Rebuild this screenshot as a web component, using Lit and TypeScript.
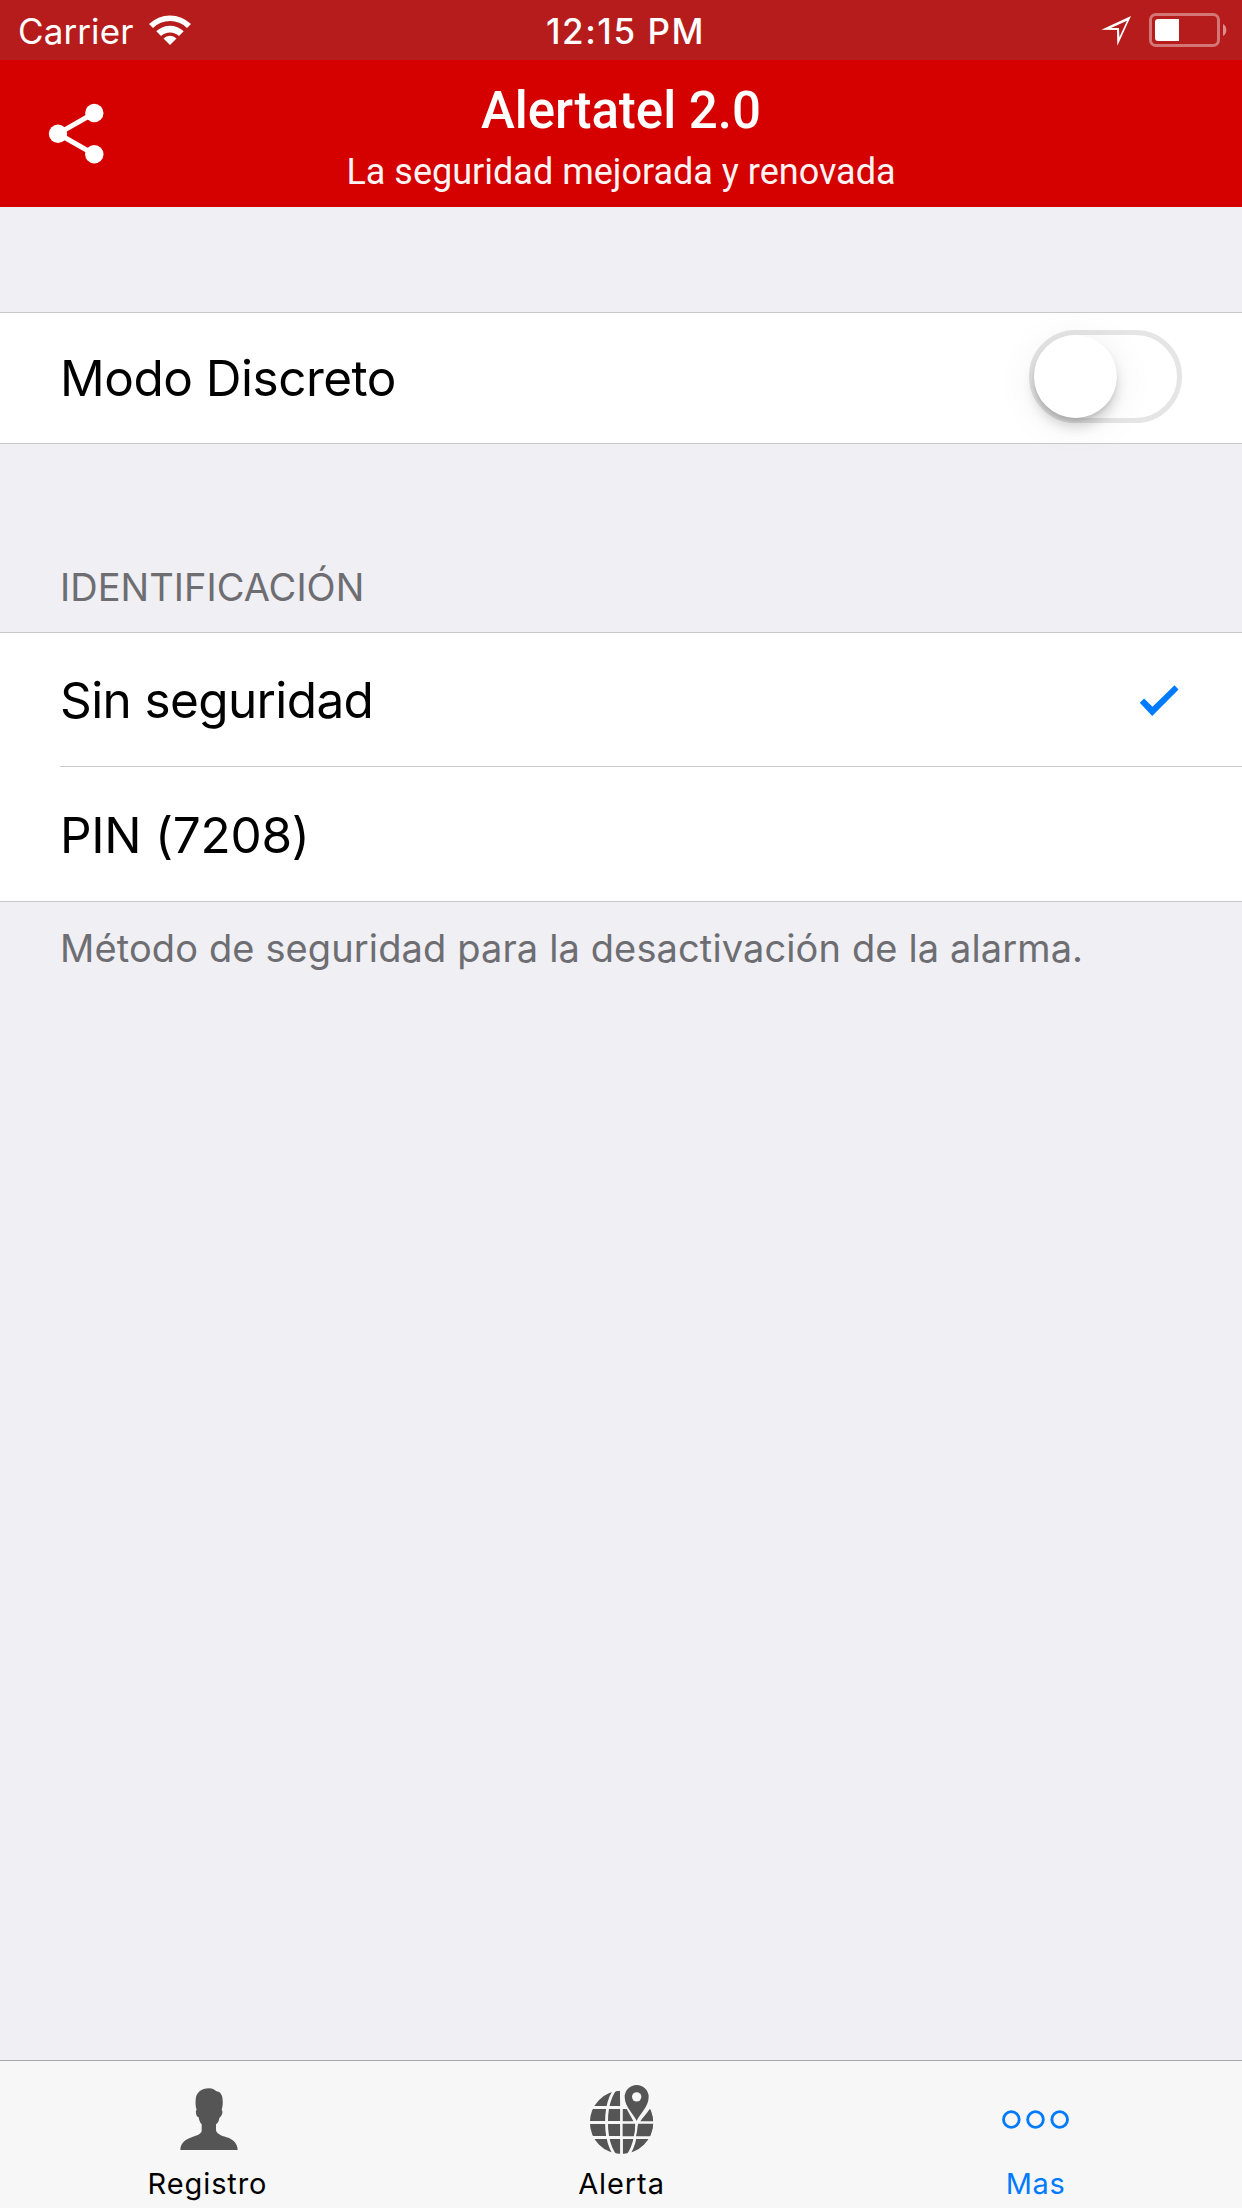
import { LitElement, html, css, svg } from "lit";
import { customElement, property, state } from "lit/decorators.js";

const checkIcon = html`<svg width="40" height="32" viewBox="0 0 40 32" fill="#007aff">
  <path d="M0.8 17.8 5.1 13.5 13.5 21.8 35.5 0.3 39.5 4.6 13.2 30.9Z" />
</svg>`;

const personIcon = svg`<svg width="62" height="63" viewBox="228 143 186 189" fill="#555">
  <path d="M241 329C241 310 255 298 275 291C292 285 304 280 305 272V252C299 246 297 238 296 231C291 229 288 224 288 217C287 213 288 210 290 209C287 200 286 190 287 178C288 157 304 144 327 144C338 144 345 149 349 153C361 154 368 164 368 180C369 192 367 202 365 209C368 211 368 216 366 222C364 228 361 231 358 233C357 241 354 248 348 252V270C350 280 362 286 380 291C400 297 413 311 413 329Z"/>
</svg>`;

const globeIcon = svg`<svg width="65" height="71" viewBox="177 132 195 213">
  <circle cx="274.5" cy="247" r="95" fill="#555"/>
  <g fill="none" stroke="#f7f7f7" stroke-width="8.5">
    <path d="M274.5 145V350M175 202.5H374M175 247.5H374M175 292.5H374"/>
    <ellipse cx="274.5" cy="247" rx="45" ry="108"/>
  </g>
  <path d="M320 262C312 240 270 208 270 171V140H374V171C374 190 366 200 362 207Z" fill="#f7f7f7"/>
  <path d="M278.500 207H290C296 218 303 229 310 243.500H278.500Z" fill="#555"/>
  <path d="M359 207C364 216 368 229 369.500 243.500H331C340 231 352 219 359 207Z" fill="#555"/>
  <path d="M278 251.500H315.500C315.500 266 313 278 311 288.500H278Z" fill="#555"/>
  <path d="M324 251.500H369.500C369 265 365 278 360 288.500H318C321 276 323.500 264 324 251.500Z" fill="#555"/>
  <path d="M320 243C314 225 284 202 284 171A36 36 0 0 1 356 171C356 202 326 225 320 243Z" fill="#555"/>
  <circle cx="320" cy="170.500" r="14" fill="#f7f7f7"/>
</svg>`;

const moreIcon = svg`<svg width="69" height="21" viewBox="123 207 207 63" fill="none" stroke="#007aff" stroke-width="8.5">
  <circle cx="154" cy="238.500" r="23.500"/>
  <circle cx="226.500" cy="238.500" r="23.500"/>
  <circle cx="299" cy="238.500" r="23.500"/>
</svg>`;

@customElement("status-bar")
export class StatusBar extends LitElement {
  static styles = css`
    :host {
      display: grid;
      grid-template-columns: 1fr auto 1fr;
      height: 60px;
      background: #b71c1c;
      color: #fff;
      font: 400 35px/60px Inter, "Liberation Sans", sans-serif;
    }
    .left, .right { display: flex; }
    .left { padding-left: 18px; }
    .right { justify-content: flex-end; padding-right: 14px; }
    .carrier { padding-top: 1px; letter-spacing: 0.1px; }
    .time { padding: 1px 0 0 9px; font-weight: 550; letter-spacing: 1.55px; }
    .wifi { margin: 14px 0 0 15px; }
    .arrow { margin: 15px 16px 0 0; }
    .battery { margin-top: 12px; }
  `;
  render() {
    return html`
      <div class="left">
        <span class="carrier">Carrier</span>
        <svg class="wifi" width="44" height="32" viewBox="149 14 44 32" fill="#fff">
          <path d="M150 24A30 30 0 0 1 192 24L188 28A24.300 24.300 0 0 0 154 28Z" />
          <path d="M157.300 31.300A19.600 19.600 0 0 1 184.700 31.300L180 36A13 13 0 0 0 162 36Z" />
          <path d="M164.500 38.500A9.200 9.200 0 0 1 177.500 38.500L171 45Z" />
        </svg>
      </div>
      <span class="time">12:15 PM</span>
      <div class="right">
        <svg class="arrow" width="31" height="32" viewBox="783 45 93 96" fill="#fff">
          <path fill-rule="evenodd" d="M784 89 873 48 832 137 831 90ZM813 84H837L838 112 861 62Z" />
        </svg>
        <svg class="battery" width="80" height="36" viewBox="1148 12 80 36">
          <rect x="1150.500" y="14.500" width="68" height="31" rx="5.500" fill="none" stroke="#fff" stroke-opacity="0.4" stroke-width="3" />
          <path d="M1158 19H1179V41H1158A3 3 0 0 1 1155 38V22A3 3 0 0 1 1158 19Z" fill="#fff" />
          <path d="M1223 24A7 7 0 0 1 1223 36Z" fill="#fff" fill-opacity="0.5" />
        </svg>
      </div>
    `;
  }
}

@customElement("app-header")
export class AppHeader extends LitElement {
  static styles = css`
    :host {
      display: grid;
      grid-template-columns: 150px 1fr 150px;
      height: 147px;
      background: #d50000;
      color: #fff;
      font-family: Roboto, "Liberation Sans", sans-serif;
    }
    .share { margin: 42px 0 0 48px; }
    .titles { padding-top: 21px; text-align: center; }
    .title { font-size: 51px; font-weight: 500; line-height: 60px; }
    .subtitle { font-size: 36px; line-height: 62px; color: #fff4f4; }
  `;
  render() {
    return html`
      <svg class="share" width="57" height="63" viewBox="48 102 57 63" fill="#fff">
        <path d="M94.300 113 58 133.700 94.300 154.300" fill="none" stroke="#fff" stroke-width="5" />
        <circle cx="94.300" cy="113" r="9.200" />
        <circle cx="58" cy="133.700" r="9.200" />
        <circle cx="94.300" cy="154.300" r="9.200" />
      </svg>
      <div class="titles">
        <div class="title">Alertatel 2.0</div>
        <div class="subtitle">La seguridad mejorada y renovada</div>
      </div>
    `;
  }
}

@customElement("toggle-switch")
export class ToggleSwitch extends LitElement {
  static styles = css`
    :host {
      display: flex;
      box-sizing: border-box;
      width: 153px;
      height: 93px;
      margin-bottom: 3px;
      border: 5px solid #e5e5e5;
      border-radius: 47px;
    }
    .knob {
      width: 83px;
      height: 83px;
      border-radius: 50%;
      background: #fff;
      box-shadow: 0 9px 12px rgba(0, 0, 0, 0.15), 0 3px 3px rgba(0, 0, 0, 0.08), 0 6px 40px rgba(0, 0, 0, 0.08);
    }
  `;
  render() {
    return html`<div class="knob"></div>`;
  }
}

@customElement("tab-item")
export class TabItem extends LitElement {
  @property() label = "";
  @property({ attribute: false }) icon: unknown;
  static styles = css`
    :host { display: flex; flex-direction: column; align-items: center; }
    .icon { display: flex; align-items: center; height: 93px; padding-top: 12px; }
    .label { font-size: 29px; line-height: 36px; padding-left: 1px; letter-spacing: var(--tracking, 0.9px); }
  `;
  render() {
    return html`<div class="icon">${this.icon}</div><div class="label">${this.label}</div>`;
  }
}

@customElement("app-root")
export class AppRoot extends LitElement {
  @state() private selected = 0;
  static styles = css`
    :host {
      display: flex;
      flex-direction: column;
      height: 2208px;
      background: #efeff4;
      color: #000;
      font-family: Inter, "Liberation Sans", sans-serif;
    }
    main { flex: 1; padding-top: 105px; }
    .group { background: #fff; border: solid #c8c7cc; border-width: 1px 0; }
    .row {
      display: flex;
      align-items: center;
      justify-content: space-between;
      height: 133px;
      padding-right: 60px;
      margin-left: 60px;
      font-size: 49.5px;
      letter-spacing: -0.62px;
    }
    .switch-row { height: 130px; letter-spacing: -0.5px; }
    .row + .row { border-top: 1px solid #c8c7cc; letter-spacing: -0.27px; padding-top: 1px; }
    .check { display: flex; padding: 2px 3px 0 0; }
    .note { padding: 0 60px; font-size: 38px; line-height: 46px; color: #6d6d72; letter-spacing: 0.12px; }
    .heading { padding-top: 120px; padding-bottom: 22px; letter-spacing: 0.02px; }
    .footer { padding-top: 23px; }
    nav {
      display: grid;
      grid-template-columns: repeat(3, 1fr);
      height: 147px;
      background: #f7f7f7;
      border-top: 1px solid #a8a8ab;
    }
    .active { color: #007aff; --tracking: 0.6px; }
  `;
  private options = ["Sin seguridad", "PIN (7208)"];
  render() {
    return html`
      <status-bar></status-bar>
      <app-header></app-header>
      <main>
        <div class="group">
          <div class="row switch-row"><span>Modo Discreto</span><toggle-switch></toggle-switch></div>
        </div>
        <div class="note heading">IDENTIFICACIÓN</div>
        <div class="group">
          ${this.options.map(
            (name, i) => html`<div class="row" @click=${() => (this.selected = i)}>
              <span>${name}</span>${i === this.selected ? html`<span class="check">${checkIcon}</span>` : ""}
            </div>`
          )}
        </div>
        <div class="note footer">Método de seguridad para la desactivación de la alarma.</div>
      </main>
      <nav>
        <tab-item label="Registro" .icon=${personIcon}></tab-item>
        <tab-item label="Alerta" .icon=${globeIcon}></tab-item>
        <tab-item class="active" label="Mas" .icon=${moreIcon}></tab-item>
      </nav>
    `;
  }
}
